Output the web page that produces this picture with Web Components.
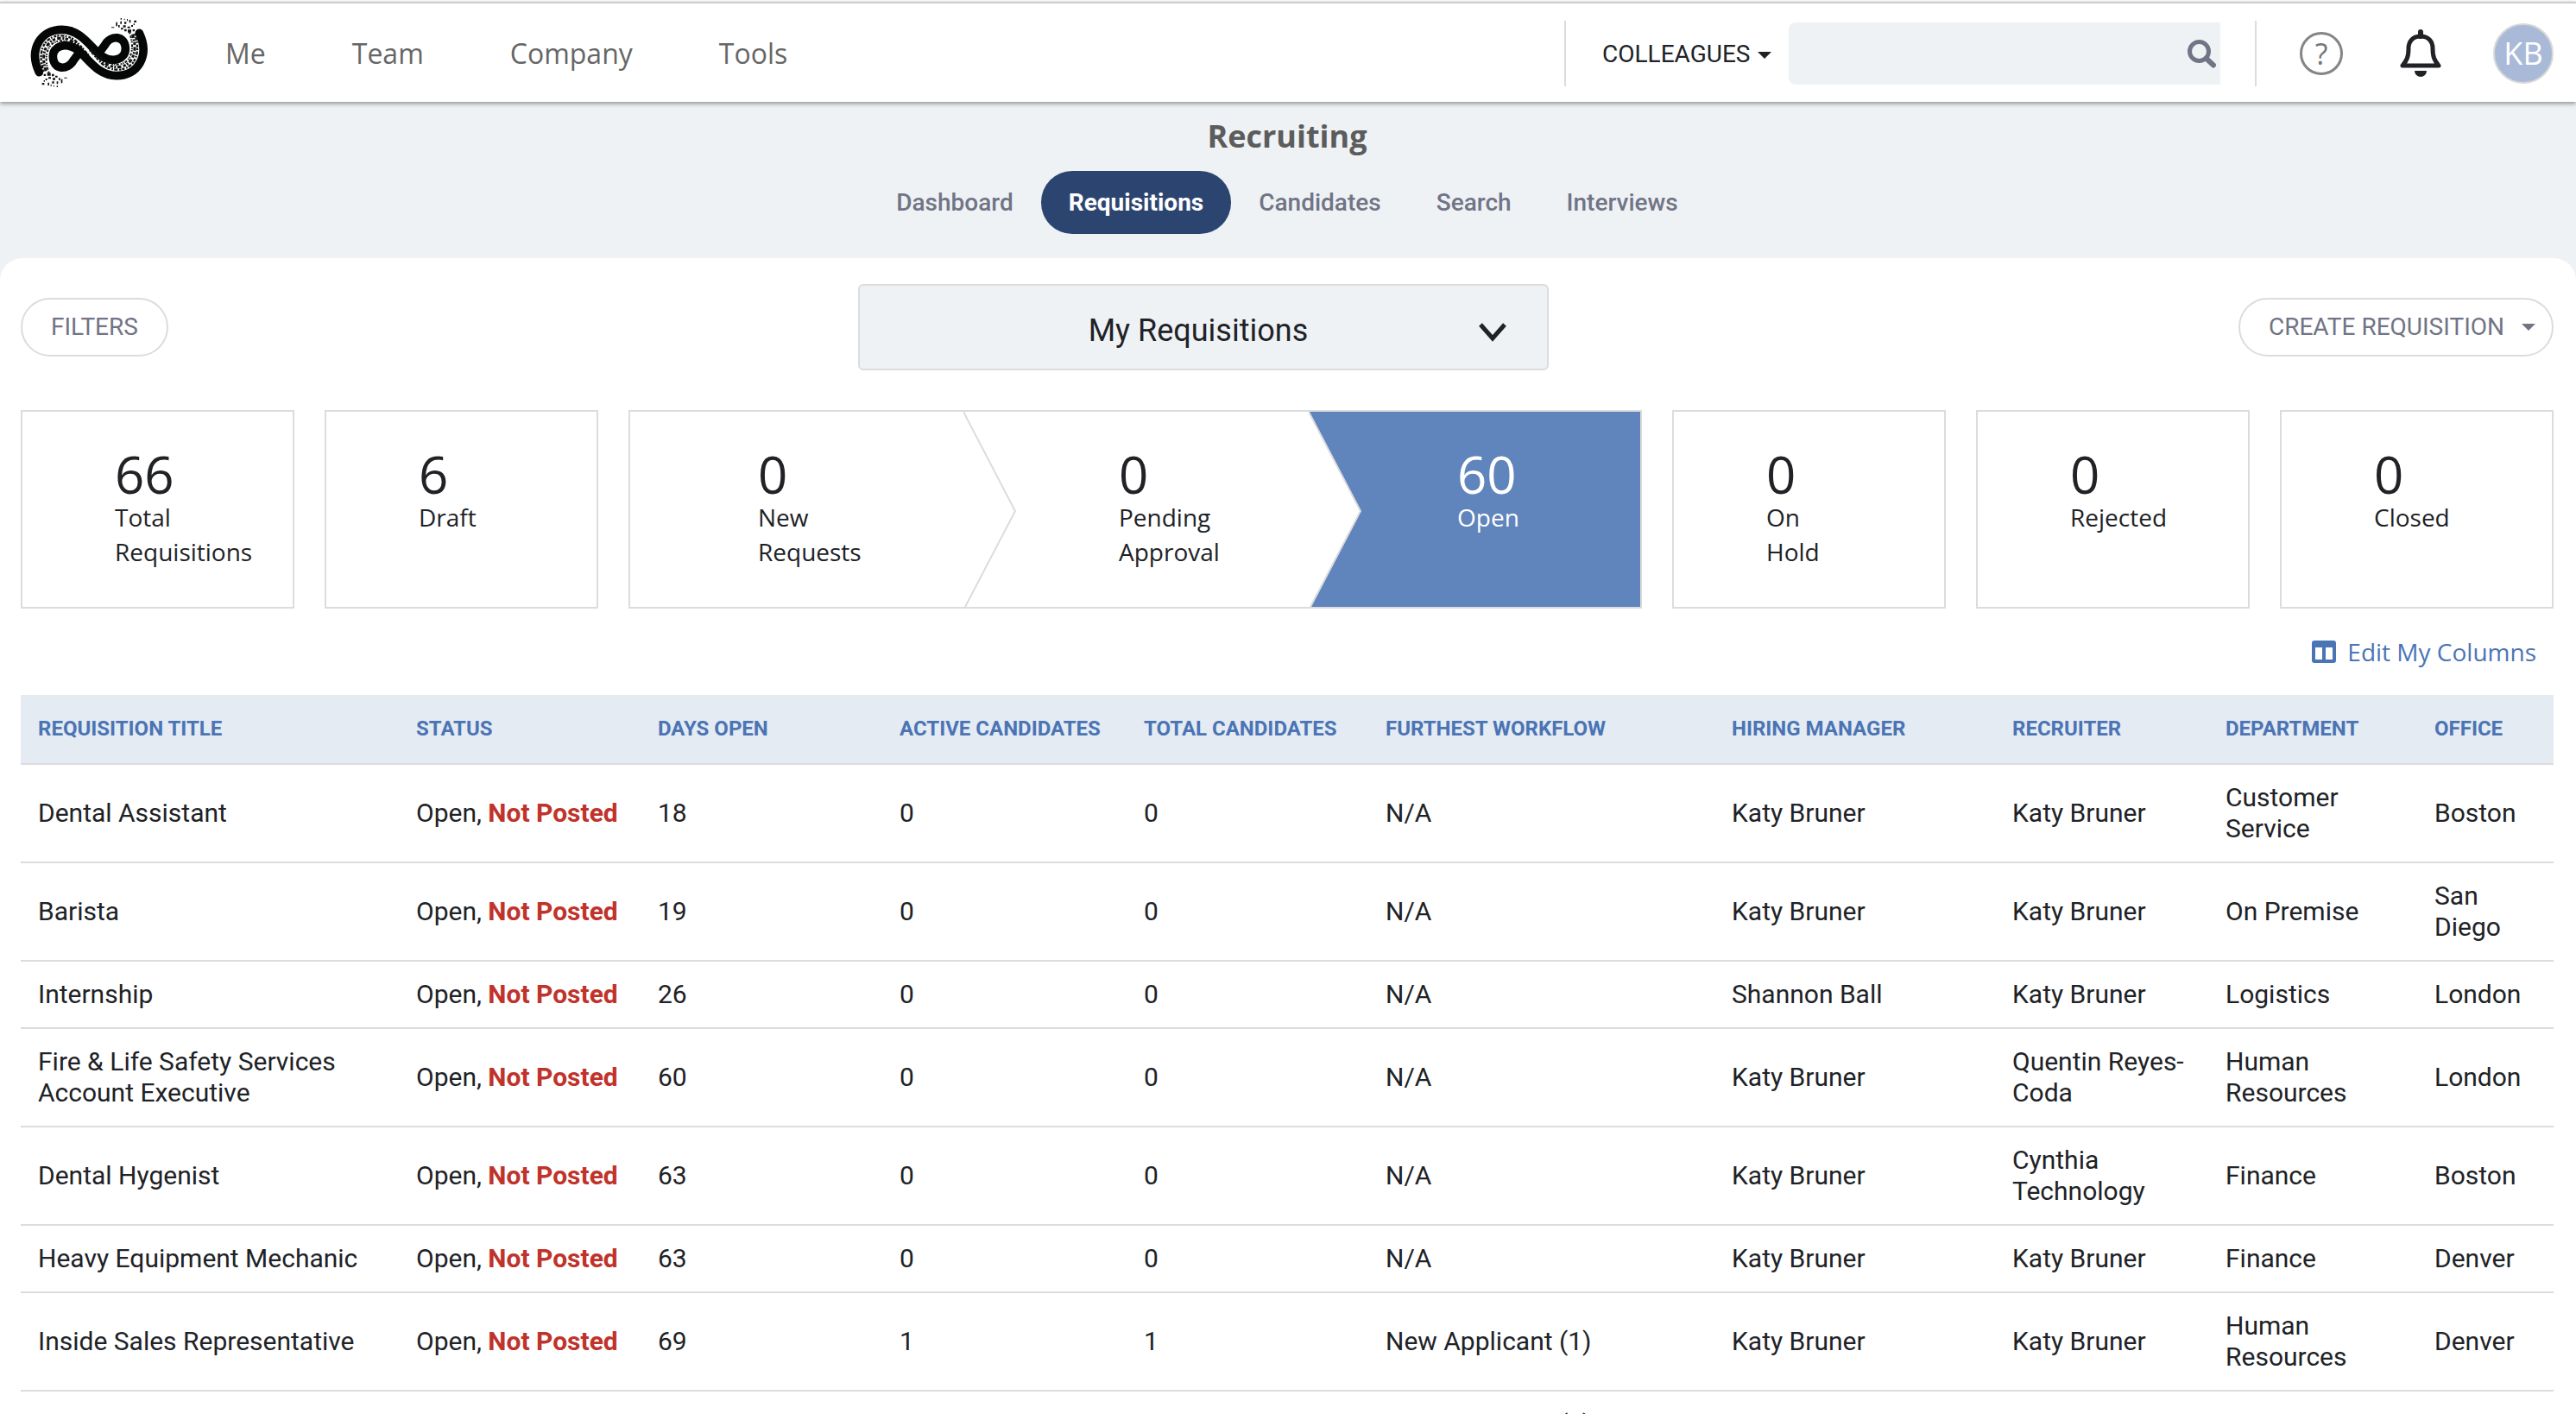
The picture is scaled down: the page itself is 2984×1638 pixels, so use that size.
<!DOCTYPE html>
<html lang="en">
<head>
<meta charset="utf-8">
<title>Recruiting - Requisitions</title>
<style>
	body {
		margin: 0;
		padding-top: 2px;
		background: #fff;
		color: #202226;
		font-family: Roboto, sans-serif;
		font-size: 30px;
	}
</style>
</head>
<body>
<elem-header initials="KB"></elem-header>
<elem-page>
	<elem-section-nav slot="nav" heading="Recruiting" selected="Requisitions"></elem-section-nav>
	<elem-toolbar></elem-toolbar>
	<elem-stages></elem-stages>
	<elem-edit-columns>Edit My Columns</elem-edit-columns>
	<elem-requisition-table></elem-requisition-table>
</elem-page>

<script>
const LINE = '#dcdcdc';

class ElemLogo extends HTMLElement {
	constructor() {
		super();
		this._root = this.attachShadow({mode: 'open'});
		this._root.innerHTML = `
			<style>
				:host {
					display: block;
				}

				svg {
					display: block;
					width: 170px;
					height: 110px;
				}
			</style>
			<svg viewBox="0 0 510 330" role="img" aria-label="Home">
				<defs>
					<g id="half">
						<path d="M76 230 C38 150 82 82 155 82 C225 82 258 150 294 174 C334 200 376 184 376 149 C376 102 325 98 304 136 L286 160" fill="none" stroke="#050707" stroke-width="29" stroke-linecap="round" stroke-linejoin="round"/>
						<path d="M92 228 C68 160 92 103 152 103 C205 103 224 150 250 172" fill="none" stroke="#111" stroke-width="7" stroke-dasharray="7 5 12 4 5 6 9 3"/>
						<path d="M100 226 C78 166 102 112 152 112 C200 112 222 154 250 176" fill="none" stroke="#111" stroke-width="9" stroke-dasharray="13 5 6 4 10 7"/>
						<path d="M110 232 C88 170 108 121 152 121 C196 121 216 156 250 184" fill="none" stroke="#111" stroke-width="6" stroke-dasharray="5 6 9 4 4 3"/>
						<path d="M92 236h7v7h-7zM104 232h12v10h-12zM120 236h8v8h-8zM132 242h8v6h-8zM108 247h9v6h-9zM123 250h9v7h-9zM98 252h6v6h-6zM144 250h5v8h-5zM152 254h5v14h-5zM137 262h5v9h-5zM121 262h7v7h-7zM106 266h5v10h-5zM92 258h4v5h-4zM86 267h8v7h-8zM163 248h10v3h-10zM116 272h3v7h-3zM137 277h4v5h-4zM126 275h3v5h-3z" fill="#111"/>
					</g>
				</defs>
				<use href="#half"/>
				<use href="#half" transform="rotate(180 250 162)"/>
			</svg>`;
	}
}

class ElemHeader extends HTMLElement {
	constructor() {
		super();
		this._root = this.attachShadow({mode: 'open'});
	}

	connectedCallback() {
		let html = `
			<style>
				:host {
					display: flex;
					align-items: center;
					position: relative;
					z-index: 1;
					box-sizing: border-box;
					min-height: 116px;
					padding: 2px 26px 0 20px;
					border-top: 2px solid #ccc;
					background: #fff;
					box-shadow: 0 2px 5px rgba(60, 65, 60, .55);
				}

				nav {
					display: flex;
					flex: 1;
					gap: 100px;
					margin-left: 71px;
				}

				nav a {
					color: #666;
					font: 32px/44px "Open Sans", sans-serif;
					text-decoration: none;
				}

				.rule {
					width: 2px;
					height: 76px;
					background: ${LINE};
				}

				.scope {
					position: relative;
					margin: 0 20px 0 40px;
				}

				select {
					appearance: none;
					padding: 0 24px 0 2px;
					border: 0;
					background: none;
					color: #202226;
					font: 28px/36px Roboto, sans-serif;
				}

				.scope svg {
					position: absolute;
					right: 0;
					top: 16px;
					pointer-events: none;
				}

				form {
					display: flex;
					align-items: center;
					width: 500px;
					height: 72px;
					margin-right: 40px;
					border-radius: 8px 0 0 8px;
					background: #eef2f5;
				}

				input {
					flex: 1;
					min-width: 0;
					padding: 0 20px;
					border: 0;
					background: none;
					font: 28px/36px Roboto, sans-serif;
				}

				button {
					display: block;
					box-sizing: border-box;
					padding: 0;
					border: 0;
					background: none;
				}

				svg {
					display: block;
				}

				.search {
					padding-right: 5px;
				}

				.help {
					width: 50px;
					height: 50px;
					margin-left: 50px;
					border: 3px solid #858585;
					border-radius: 50%;
					color: #777;
					font: 34px/44px "Open Sans", sans-serif;
				}

				.bell {
					margin: 0 60px 0 66px;
				}

				.avatar {
					width: 70px;
					height: 70px;
					border: 2px solid #d8d8d8;
					border-radius: 50%;
					background: #a9bad8;
					color: #fff;
					font: 36px/66px "Open Sans", sans-serif;
				}
			</style>
			<elem-logo></elem-logo>
			<nav>`;
		for (let item of ['Me', 'Team', 'Company', 'Tools']) {
			html += `<a href="#">` + item + `</a>`;
		}
		html += `
			</nav>
			<div class="rule"></div>
			<div class="scope">
				<select aria-label="Search in"><option>COLLEAGUES</option></select>
				<svg width="16" height="8"><path d="M0 0h16l-8 8z" fill="#202226"/></svg>
			</div>
			<form>
				<input type="text" aria-label="Search colleagues">
				<button type="button" class="search" aria-label="Search">
					<svg width="33" height="33" viewBox="0 0 33 33" fill="none" stroke="#717485">
						<circle cx="13.500" cy="13.500" r="11" stroke-width="5"/>
						<path d="M21.500 21.500L30 29.500" stroke-width="6" stroke-linecap="round"/>
					</svg>
				</button>
			</form>
			<div class="rule"></div>
			<button type="button" class="help" aria-label="Help">?</button>
			<button type="button" class="bell" aria-label="Notifications">
				<svg width="48" height="56" viewBox="0 0 48 56">
					<path d="M24 8C15 8 10 14 10 22C10 32 8 36 3 42H45C40 36 38 32 38 22C38 14 33 8 24 8Z" fill="none" stroke="#202226" stroke-width="5" stroke-linejoin="round"/>
					<path d="M24 3v5" stroke="#202226" stroke-width="6" stroke-linecap="round"/>
					<path d="M17 48h14a7 7 0 0 1-14 0z" fill="#202226"/>
				</svg>
			</button>
			<button type="button" class="avatar">` + this.getAttribute('initials') + `</button>`;
		this._root.innerHTML = html;
	}
}

class ElemPage extends HTMLElement {
	constructor() {
		super();
		this._root = this.attachShadow({mode: 'open'});
		this._root.innerHTML = `
			<style>
				:host {
					display: block;
					background: #eef2f5;
				}

				main {
					padding: 30px 26px 0 24px;
					border-radius: 26px 26px 0 0;
					background: #fff;
				}
			</style>
			<slot name="nav"></slot>
			<main><slot></slot></main>`;
	}
}

class ElemSectionNav extends HTMLElement {
	constructor() {
		super();
		this._root = this.attachShadow({mode: 'open'});
	}

	connectedCallback() {
		let html = `
			<style>
				:host {
					display: block;
					padding: 16px 2px 28px 0;
				}

				h1 {
					margin: 0 0 16px;
					color: #5c5c5c;
					font: bold 36px/48px "Open Sans", sans-serif;
					text-align: center;
				}

				nav {
					display: flex;
					justify-content: center;
				}

				a {
					padding: 20px 32px;
					border-radius: 36px;
					color: #717485;
					font-size: 28px;
					font-weight: 500;
					line-height: 33px;
					text-decoration: none;
				}

				a[aria-current] {
					background: #2c4570;
					color: #fff;
					font-weight: bold;
				}
			</style>
			<h1>` + this.getAttribute('heading') + `</h1>
			<nav>`;
		for (let tab of ['Dashboard', 'Requisitions', 'Candidates', 'Search', 'Interviews']) {
			let current = tab === this.getAttribute('selected') ? ' aria-current="page"' : '';
			html += `<a href="#"` + current + `>` + tab + `</a>`;
		}
		html += `</nav>`;
		this._root.innerHTML = html;
	}
}

class ElemToolbar extends HTMLElement {
	constructor() {
		super();
		this._root = this.attachShadow({mode: 'open'});
		this._root.innerHTML = `
			<style>
				:host {
					display: flex;
					align-items: center;
					justify-content: space-between;
					margin-bottom: 46px;
				}

				button {
					display: flex;
					align-items: center;
					gap: 20px;
					height: 68px;
					padding: 0 33px;
					border: 2px solid ${LINE};
					border-radius: 34px;
					background: #fff;
					color: #717485;
					font: 28px/36px Roboto, sans-serif;
				}

				.create {
					padding-right: 19px;
				}

				.view {
					position: relative;
					width: 800px;
				}

				select {
					appearance: none;
					display: block;
					box-sizing: border-box;
					width: 100%;
					height: 100px;
					padding: 8px 12px 0 0;
					border: 2px solid ${LINE};
					border-radius: 6px;
					background: #eef2f5;
					color: #202226;
					font: 36px/44px Roboto, sans-serif;
					text-align: center;
					text-align-last: center;
				}

				.view svg {
					position: absolute;
					right: 48px;
					top: 44px;
					pointer-events: none;
				}
			</style>
			<button type="button">FILTERS</button>
			<div class="view">
				<select aria-label="View"><option>My Requisitions</option></select>
				<svg width="34" height="24" viewBox="0 0 34 24"><path d="M3 3L17 19L31 3" fill="none" stroke="#202226" stroke-width="5"/></svg>
			</div>
			<button type="button" class="create">
				CREATE REQUISITION
				<svg width="16" height="8"><path d="M0 0h16l-8 8z" fill="#717485"/></svg>
			</button>`;
	}
}

class ElemStage extends HTMLElement {
	constructor() {
		super();
		this._root = this.attachShadow({mode: 'open'});
	}

	connectedCallback() {
		let html = `
			<style>
				:host {
					display: block;
					position: relative;
					box-sizing: border-box;
					min-height: 226px;
					padding: 42px 0 0 107px;
					font-family: "Open Sans", sans-serif;
				}

				:host([indent="first"]) {
					padding-left: 148px;
				}

				:host([indent="middle"]) {
					padding-left: 180px;
				}

				:host([indent="last"]) {
					padding-left: 172px;
				}

				:host([selected]) {
					background: #6084bc;
					color: #fff;
				}

				a {
					display: block;
					color: inherit;
					text-decoration: none;
				}

				.count {
					font-size: 60px;
					line-height: 60px;
				}

				.label {
					width: min-content;
					font-size: 28px;
					line-height: 40px;
				}

				svg {
					position: absolute;
					left: 0;
					top: 0;
					width: 62px;
					height: 100%;
				}
			</style>`;
		if (this.hasAttribute('arrow')) {
			html += `
				<svg viewBox="0 0 62 226" preserveAspectRatio="none">
					<path d="M0 0L60 115L2 226H0Z" fill="#fff"/>
					<path d="M0 0L60 115L2 226" fill="none" stroke="${LINE}" stroke-width="2"/>
				</svg>`;
		}
		html += `
			<a href="#">
				<div class="count">` + this.getAttribute('count') + `</div>
				<div class="label"><slot></slot></div>
			</a>`;
		this._root.innerHTML = html;
	}
}

class ElemStages extends HTMLElement {
	constructor() {
		super();
		this._root = this.attachShadow({mode: 'open'});
		this._root.innerHTML = `
			<style>
				:host {
					display: grid;
					grid-template-columns: 317fr 317fr 1174fr 317fr 317fr 317fr;
					gap: 35px;
					margin-bottom: 30px;
				}

				.card {
					border: 2px solid ${LINE};
				}

				.flow {
					display: grid;
					grid-template-columns: 386fr 400fr 384fr;
				}
			</style>
			<div class="card"><elem-stage count="66">Total Requisitions</elem-stage></div>
			<div class="card"><elem-stage count="6">Draft</elem-stage></div>
			<div class="card flow">
				<elem-stage count="0" indent="first">New Requests</elem-stage>
				<elem-stage count="0" indent="middle" arrow>Pending Approval</elem-stage>
				<elem-stage count="60" indent="last" arrow selected>Open</elem-stage>
			</div>
			<div class="card"><elem-stage count="0">On Hold</elem-stage></div>
			<div class="card"><elem-stage count="0">Rejected</elem-stage></div>
			<div class="card"><elem-stage count="0">Closed</elem-stage></div>`;
	}
}

class ElemEditColumns extends HTMLElement {
	constructor() {
		super();
		this._root = this.attachShadow({mode: 'open'});
		this._root.innerHTML = `
			<style>
				:host {
					display: flex;
					justify-content: flex-end;
					margin-bottom: 30px;
					padding-right: 20px;
				}

				a {
					display: flex;
					align-items: center;
					gap: 13px;
					color: #4b74b5;
					font: 28px/40px "Open Sans", sans-serif;
					text-decoration: none;
				}
			</style>
			<a href="#">
				<svg width="28" height="26"><path fill-rule="evenodd" d="M3 0H25a3 3 0 0 1 3 3V23a3 3 0 0 1-3 3H3a3 3 0 0 1-3-3V3a3 3 0 0 1 3-3zM4 8V22H12V8zM16 8V22H24V8z" fill="#4b74b5"/></svg>
				<slot></slot>
			</a>`;
	}
}

class ElemRequisitionTable extends HTMLElement {
	constructor() {
		super();

		this._columns = [
			['Requisition Title', 438],
			['Status', 280],
			['Days Open', 280],
			['Active Candidates', 283],
			['Total Candidates', 280],
			['Furthest Workflow', 401],
			['Hiring Manager', 325],
			['Recruiter', 247],
			['Department', 242],
			['Office', 158]
		];
		this._rows = [
			['Dental Assistant', 18, 0, 0, 'N/A', 'Katy Bruner', 'Katy Bruner', 'Customer Service', 'Boston'],
			['Barista', 19, 0, 0, 'N/A', 'Katy Bruner', 'Katy Bruner', 'On Premise', 'San Diego'],
			['Internship', 26, 0, 0, 'N/A', 'Shannon Ball', 'Katy Bruner', 'Logistics', 'London'],
			['Fire &amp; Life Safety Services Account Executive', 60, 0, 0, 'N/A', 'Katy Bruner', 'Quentin Reyes-Coda', 'Human Resources', 'London'],
			['Dental Hygenist', 63, 0, 0, 'N/A', 'Katy Bruner', 'Cynthia Technology', 'Finance', 'Boston'],
			['Heavy Equipment Mechanic', 63, 0, 0, 'N/A', 'Katy Bruner', 'Katy Bruner', 'Finance', 'Denver'],
			['Inside Sales Representative', 69, 1, 1, 'New Applicant (1)', 'Katy Bruner', 'Katy Bruner', 'Human Resources', 'Denver'],
			['Photographer', 70, 1, 1, 'New Applicant (1)', 'Katy Bruner', 'Katy Bruner', 'Finance', 'Denver']
		];

		this._root = this.attachShadow({mode: 'open'});
		this.update();
	}

	update() {
		let html = `
			<style>
				:host {
					display: block;
				}

				table {
					width: 100%;
					table-layout: fixed;
					border-spacing: 0;
				}

				th, td {
					padding: 20px;
					border-bottom: 2px solid ${LINE};
					text-align: left;
				}

				th {
					background: #e4ebf2;
					color: #4b74b5;
					font-size: 24px;
					line-height: 39px;
					text-transform: uppercase;
					white-space: nowrap;
				}

				td {
					font-size: 30px;
					line-height: 36px;
				}

				td:nth-child(2) {
					padding-right: 0;
				}

				b {
					color: #c0332b;
				}
			</style>
			<table>
				<colgroup>`;
		for (let column of this._columns) {
			html += `<col style="width: ` + column[1] + `px">`;
		}
		html += `</colgroup><thead><tr>`;
		for (let column of this._columns) {
			html += `<th>` + column[0] + `</th>`;
		}
		html += `</tr></thead><tbody>`;
		for (let row of this._rows) {
			html += `<tr><td>` + row[0] + `</td><td>Open, <b>Not Posted</b></td>`;
			for (let i = 1; i < row.length; i++) {
				html += `<td>` + row[i] + `</td>`;
			}
			html += `</tr>`;
		}
		html += `</tbody></table>`;
		this._root.innerHTML = html;
	}
}

window.customElements.define('elem-logo', ElemLogo);
window.customElements.define('elem-header', ElemHeader);
window.customElements.define('elem-page', ElemPage);
window.customElements.define('elem-section-nav', ElemSectionNav);
window.customElements.define('elem-toolbar', ElemToolbar);
window.customElements.define('elem-stage', ElemStage);
window.customElements.define('elem-stages', ElemStages);
window.customElements.define('elem-edit-columns', ElemEditColumns);
window.customElements.define('elem-requisition-table', ElemRequisitionTable);
</script>
</body>
</html>
